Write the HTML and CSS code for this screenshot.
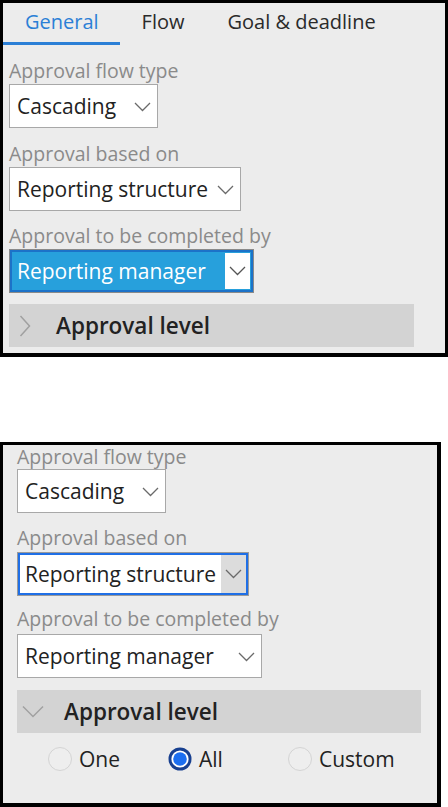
FILE: index.html
```html
<!DOCTYPE html>
<html>
<head>
<meta charset="utf-8">
<link rel="stylesheet" href="styles.css">
</head>
<body>
<div class="panel panel-one">
  <div class="tabs">
    <div class="tab active">General</div>
    <div class="tab">Flow</div>
    <div class="tab">Goal &amp; deadline</div>
  </div>
  <div class="content">
    <div class="label m14">Approval flow type</div>
    <div class="select w149 m1"><span>Cascading</span>
      <svg class="chev" width="17" height="10" viewBox="0 0 17 10"><polyline points="1,1 8.5,8.5 16,1" fill="none" stroke="#6a6a6a" stroke-width="1.3"/></svg>
    </div>
    <div class="label m14">Approval based on</div>
    <div class="select w232 m1"><span>Reporting structure</span>
      <svg class="chev" width="17" height="10" viewBox="0 0 17 10"><polyline points="1,1 8.5,8.5 16,1" fill="none" stroke="#6a6a6a" stroke-width="1.3"/></svg>
    </div>
    <div class="label m13">Approval to be completed by</div>
    <div class="select hl w245 m1"><span>Reporting manager</span>
      <div class="arrowbox white"><svg width="17" height="10" viewBox="0 0 17 10"><polyline points="1,1 8.5,8.5 16,1" fill="none" stroke="#555" stroke-width="1.3"/></svg></div>
    </div>
    <div class="accordion a1 m11">
      <div class="acc-icon"><svg width="12" height="22" viewBox="0 0 12 22"><polyline points="1.5,1 10.5,11 1.5,21" fill="none" stroke="#a0a0a0" stroke-width="1.5"/></svg></div>
      <div class="acc-title">Approval level</div>
    </div>
  </div>
</div>

<div class="panel panel-two">
  <div class="content two">
    <div class="label m0">Approval flow type</div>
    <div class="select w149 m0"><span>Cascading</span>
      <svg class="chev" width="17" height="10" viewBox="0 0 17 10"><polyline points="1,1 8.5,8.5 16,1" fill="none" stroke="#6a6a6a" stroke-width="1.3"/></svg>
    </div>
    <div class="label m13">Approval based on</div>
    <div class="select focus w232 m2"><span>Reporting structure</span>
      <div class="arrowbox grey"><svg width="17" height="10" viewBox="0 0 17 10"><polyline points="1,1 8.5,8.5 16,1" fill="none" stroke="#6a6a6a" stroke-width="1.3"/></svg></div>
    </div>
    <div class="label m11">Approval to be completed by</div>
    <div class="select w245 m3"><span>Reporting manager</span>
      <svg class="chev" width="17" height="10" viewBox="0 0 17 10"><polyline points="1,1 8.5,8.5 16,1" fill="none" stroke="#6a6a6a" stroke-width="1.3"/></svg>
    </div>
    <div class="accordion a2 m12">
      <div class="acc-icon"><svg width="22" height="13" viewBox="0 0 22 13"><polyline points="1,1.5 11,11.5 21,1.5" fill="none" stroke="#a0a0a0" stroke-width="1.5"/></svg></div>
      <div class="acc-title">Approval level</div>
    </div>
    <div class="radios">
      <div class="radio"><span class="dot"></span><span>One</span></div>
      <div class="radio"><svg class="dot-on" width="24" height="24" viewBox="0 0 24 24"><circle cx="12" cy="12" r="11.5" fill="#173f8f"/><circle cx="12" cy="12" r="8.6" fill="#fff"/><circle cx="12" cy="12" r="6.8" fill="#1b6ef0"/></svg><span>All</span></div>
      <div class="radio"><span class="dot"></span><span>Custom</span></div>
    </div>
  </div>
</div>
</body>
</html>
```
FILE: styles.css
```css
html, body {
  margin: 0;
  padding: 0;
  background: #fff;
}
body {
  font-family: "Open Sans", "Noto Sans", sans-serif;
  color: #222;
}
.panel {
  box-sizing: border-box;
  background: #ececec;
  border-style: solid;
  border-color: #000;
  overflow: hidden;
}
.panel-one {
  width: 448px;
  height: 357px;
  border-width: 3px 3px 4px 3px;
}
.panel-two {
  width: 441px;
  height: 365px;
  margin-top: 85px;
  border-width: 3px 4px 4px 3px;
}
.tabs {
  display: flex;
  height: 42px;
}
.tab {
  font-size: 20px;
  line-height: 37px;
  padding: 0 21px 2px 22px;
  border-bottom: 3px solid transparent;
  color: #2a2a2a;
}
.tab.active {
  color: #2b7fd6;
  border-bottom-color: #2b7fd6;
}
.content {
  display: flex;
  flex-direction: column;
  align-items: flex-start;
  padding: 0 6px;
}
.content.two {
  padding: 0 14px;
}
.label {
  font-size: 19.5px;
  line-height: 24px;
  color: #8a8a8a;
}
.m0 { margin-top: 0; }
.m1 { margin-top: 1px; }
.m2 { margin-top: 2px; }
.m3 { margin-top: 3px; }
.m11 { margin-top: 11px; }
.m12 { margin-top: 12px; }
.m13 { margin-top: 13px; }
.m14 { margin-top: 14px; }
.select {
  box-sizing: border-box;
  height: 44px;
  background: #fff;
  border: 1px solid #a8a8a8;
  display: flex;
  align-items: center;
  justify-content: space-between;
  padding: 0 6px 0 7px;
  font-size: 21px;
  color: #222;
}
.w149 { width: 149px; }
.w232 { width: 232px; }
.w245 { width: 245px; }
.chev {
  flex: none;
  margin-top: 2px;
}
.select.hl {
  background: #27a0dc;
  border: 1px solid #8a8a8a;
  box-shadow: inset 0 0 0 2px #1c72c8;
  color: #fff;
  padding: 0 3px 0 7px;
}
.select.focus {
  border: 1px solid #9a9a9a;
  box-shadow: inset 0 0 0 2px #1f6fe6;
  padding: 0 2px 0 7px;
}
.arrowbox {
  flex: none;
  width: 25px;
  height: 36px;
  display: flex;
  align-items: center;
  justify-content: center;
}
.arrowbox.white { background: #fff; }
.arrowbox.grey { background: #dcdcdc; height: 38px; }
.accordion {
  box-sizing: border-box;
  height: 43px;
  background: #d3d3d3;
  display: flex;
  align-items: center;
}
.a1 { width: 405px; }
.a2 { width: 404px; }
.acc-icon {
  width: 32px;
  display: flex;
  justify-content: center;
  flex: none;
}
.acc-title {
  margin-left: 15px;
  font-size: 22.5px;
  font-weight: 600;
  color: #222;
}
.radios {
  display: flex;
  margin-top: 6px;
  padding-left: 31px;
  height: 40px;
  align-items: center;
}
.radio {
  width: 120px;
  display: flex;
  align-items: center;
  gap: 7px;
  font-size: 21px;
  color: #222;
}
.dot {
  box-sizing: border-box;
  width: 24px;
  height: 24px;
  border-radius: 50%;
  border: 1px solid #d4d4d4;
  background: #eeeeee;
  flex: none;
}
.dot-on { flex: none; }
```
